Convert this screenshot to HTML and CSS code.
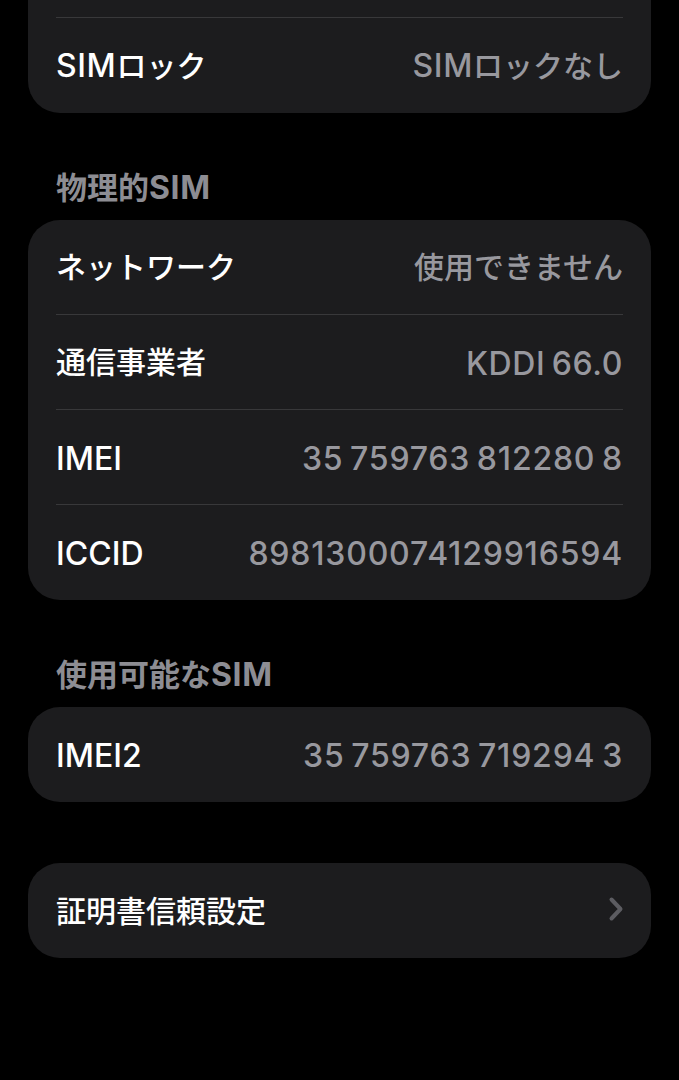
FILE: index.html
```html
<!DOCTYPE html>
<html lang="ja">
<head>
  <meta charset="UTF-8">
  <title>情報</title>
  <link rel="stylesheet" href="styles.css">
</head>
<body>
  <div class="page">
    <div class="card card-top">
      <div class="row row-hidden"></div>
      <div class="row">
        <span class="label"><span class="en">SIM</span>ロック</span>
        <span class="value"><span class="en">SIM</span>ロックなし</span>
      </div>
    </div>

    <h3 class="section-title">物理的<span class="en">SIM</span></h3>
    <div class="card">
      <div class="row">
        <span class="label">ネットワーク</span>
        <span class="value">使用できません</span>
      </div>
      <div class="row">
        <span class="label">通信事業者</span>
        <span class="value en spaced">KDDI 66.0</span>
      </div>
      <div class="row">
        <span class="label en">IMEI</span>
        <span class="value en num spaced">35 759763 812280 8</span>
      </div>
      <div class="row">
        <span class="label en">ICCID</span>
        <span class="value en num">8981300074129916594</span>
      </div>
    </div>

    <h3 class="section-title">使用可能な<span class="en">SIM</span></h3>
    <div class="card">
      <div class="row">
        <span class="label en">IMEI2</span>
        <span class="value en num spaced">35 759763 719294 3</span>
      </div>
    </div>

    <div class="card card-spaced">
      <div class="row">
        <span class="label">証明書信頼設定</span>
        <svg class="chevron" width="16" height="26" viewBox="0 0 16 26">
          <path d="M3.5 3.5 L12.5 13 L3.5 22.5" fill="none" stroke="currentColor" stroke-width="4" stroke-linecap="round" stroke-linejoin="round"/>
        </svg>
      </div>
    </div>
  </div>
</body>
</html>
```

FILE: styles.css
```css
body { margin: 0; background: #000; color: #fff; font-family: Inter, "Noto Sans CJK JP", sans-serif; }
.page { padding: 0 28px 120px; }
.card { background: #1c1c1e; border-radius: 32px; overflow: hidden; }
.card-top { margin-top: -77px; border-top-left-radius: 0; border-top-right-radius: 0; }
.card-spaced { margin-top: 61px; }
.row { display: flex; align-items: center; justify-content: space-between; box-sizing: border-box; height: 95px; padding-bottom: 4px; margin: 0 28px; border-bottom: 1px solid #38383a; }
.row:last-child { border-bottom: none; }
.label { font-size: 30px; font-weight: 500; }
.value { font-size: 30px; font-weight: 500; color: #98989e; }
.en { font-size: 32px; letter-spacing: 0.6px; }
.label.en, .value.en { padding-top: 6px; }
.label.en { letter-spacing: 0; }
.num { letter-spacing: 0.8px; }
.spaced { word-spacing: -2.6px; }
.section-title { margin: 58px 0 15px 28px; font-size: 31px; line-height: 34px; font-weight: 700; color: #8d8d93; }
.chevron { color: #5c5c61; margin-right: -1px; }
```
